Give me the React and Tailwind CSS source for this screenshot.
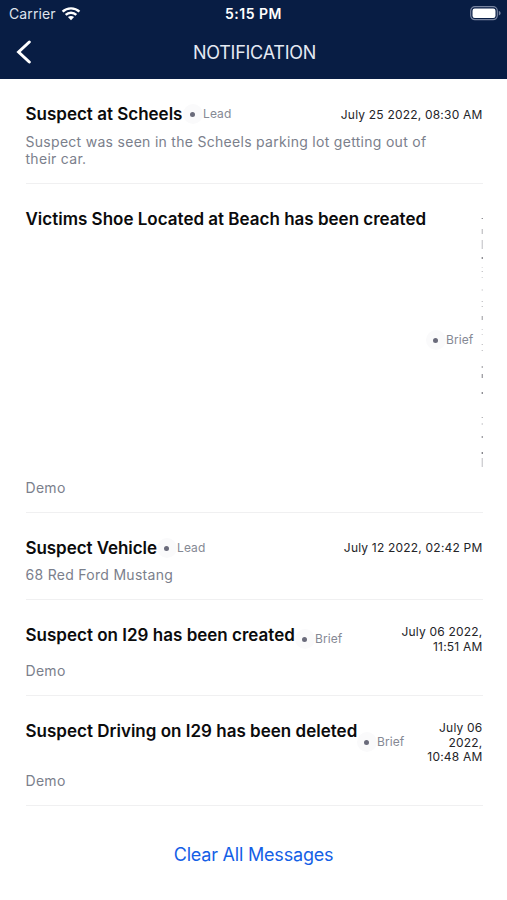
const MESSAGES = [
  {
    title: 'Suspect at Scheels', titleClass: 'w-[157px] tracking-[0]', kind: 'Lead', kindClass: 'pt-[11px]',
    date: ['July 25 2022, 08:30 AM'], dateClass: 'pt-[5px]',
    body: ['Suspect was seen in the Scheels parking lot getting out of', 'their car.'],
    row: 'h-[104px] pt-[23px]', head: 'h-[30px]',
  },
  {
    title: 'Victims Shoe Located at Beach has been created', titleClass: 'w-[400px] tracking-[0]', kind: 'Brief', kindClass: 'pt-[132px]',
    date: null, dateClass: '',
    body: ['Demo'],
    row: 'h-[329px] pt-[24px]', head: 'h-[271px]',
  },
  {
    title: 'Suspect Vehicle', titleClass: 'w-[131px] tracking-[-0.06px]', kind: 'Lead', kindClass: 'pt-[11px]',
    date: ['July 12 2022, 02:42 PM'], dateClass: 'pt-[4px]',
    body: ['68 Red Ford Mustang'],
    row: 'h-[87px] pt-[24px]', head: 'h-[29px]',
  },
  {
    title: 'Suspect on I29 has been created', titleClass: 'w-[269px] tracking-[0.01px]', kind: 'Brief', kindClass: 'pt-[15px]',
    date: ['July 06 2022,', '11:51 AM'], dateClass: 'pt-[1px]',
    body: ['Demo'],
    row: 'h-[96px] pt-[24px]', head: 'h-[38px]',
  },
  {
    title: 'Suspect Driving on I29 has been deleted', titleClass: 'w-[331px] tracking-[0.01px]', kind: 'Brief', kindClass: 'pt-[22px]',
    date: ['July 06', '2022,', '10:48 AM'], dateClass: 'pt-[1px]',
    body: ['Demo'],
    row: 'h-[110px] pt-[24px]', head: 'h-[52px]',
  },
];

// [offset, height, opacity] of every sliver left visible by the collapsed date column
const SLIVERS = [
  [6, 1, 0.6], [17, 5, 0.3], [28, 9, 0.25], [45, 2, 0.6], [55, 1, 0.15], [59, 1, 0.3], [65, 1, 0.2],
  [77, 2, 0.15], [89, 1, 0.3], [94, 1, 0.3], [104, 4, 0.4], [117, 1, 0.2], [122, 1, 0.2],
  [132, 1, 0.3], [138, 1, 0.3], [154, 2, 0.4], [162, 4, 0.5], [180, 2, 0.6],
  [205, 1, 0.4], [211, 2, 0.2], [224, 2, 0.5], [240, 2, 0.65], [246, 9, 0.25],
];

function StatusBar() {
  return (
    <div className="flex h-[27px] items-center text-white">
      <div className="flex w-[169px] items-center pl-[9px]">
        <span className="w-[47px] whitespace-nowrap text-[14px] leading-[20px] tracking-[0.1px] text-[#dfe3ec]">Carrier</span>
        <svg className="ml-[5px] h-[14px] w-[20px]" viewBox="0 0 20 14" fill="none" stroke="white" strokeWidth="2.4">
          <path d="M1.6 4.7C6.2 .2 13.8 .2 18.4 4.7" />
          <path d="M4.7 7.9C7.6 5 12.4 5 15.3 7.9" />
          <path d="M10 13.2L6.9 10C8.6 8.5 11.4 8.5 13.1 10Z" fill="white" stroke="none" />
        </svg>
      </div>
      <div className="w-[169px] whitespace-nowrap text-center text-[14px] font-semibold leading-[20px] tracking-[0.5px]">5:15 PM</div>
      <div className="flex w-[169px] justify-end pr-[6px]">
        <svg className="h-[15px] w-[31px]" viewBox="0 0 31 15">
          <rect x=".7" y=".7" width="26.6" height="13" rx="4.2" fill="none" stroke="#7884a0" strokeWidth="1.2" />
          <rect x="2.5" y="2.5" width="23" height="9.4" rx="2.2" fill="white" />
          <path d="M28.8 5v4.4c1.2-.4 1.8-1.2 1.8-2.2s-.6-1.8-1.8-2.2Z" fill="#7884a0" />
        </svg>
      </div>
    </div>
  );
}

function Message({ item }) {
  return (
    <section className={`border-b border-[#f0f0f1] ${item.row}`}>
      <div className={`flex items-start ${item.head}`}>
        <h2 className={`shrink-0 whitespace-nowrap text-[17px] font-semibold leading-[22px] text-[#0b0b0c] ${item.titleClass}`}>{item.title}</h2>
        <div className={`flex h-0 shrink-0 items-center ${item.kindClass}`}>
          <span className="flex h-[20px] w-[20.5px] items-center justify-center rounded-full bg-[#fafafb]">
            <span className="h-[5px] w-[5px] rounded-full bg-[#6a6b7b]" />
          </span>
          <span className="whitespace-nowrap text-[12px] leading-[16px] tracking-[0.1px] text-[#858994]">{item.kind}</span>
        </div>
        {item.date ? (
          <div className={`ml-auto pr-[0.5px] text-right text-[12px] leading-[14.5px] tracking-[0.2px] text-[#242428] ${item.dateClass}`}>
            {item.date.map((line) => (
              <div key={line} className="whitespace-nowrap">{line}</div>
            ))}
          </div>
        ) : (
          <svg className="ml-auto mt-[4px] h-[258px] w-[2px]" viewBox="0 0 2 258" fill="#45454f">
            {SLIVERS.map(([y, h, o]) => (
              <rect key={y} x="0.6" y={y} width="1.4" height={h} opacity={o} />
            ))}
          </svg>
        )}
      </div>
      <div className="text-[14px] leading-[17px] tracking-[0.29px] text-[#7b808c]">
        {item.body.map((line) => (
          <div key={line} className="whitespace-nowrap">{line}</div>
        ))}
      </div>
    </section>
  );
}

export default function App() {
  return (
    <div className="h-[900px] w-[507px] overflow-hidden bg-white font-['Inter','Liberation_Sans',sans-serif]">
      <header className="h-[79px] bg-[#081d44]">
        <StatusBar />
        <div className="flex h-[50px] items-center">
          <button className="flex w-[60px] pl-[16px]" aria-label="Back">
            <svg className="h-[24px] w-[16px]" viewBox="0 0 16 24" fill="none" stroke="white" strokeWidth="3" strokeLinecap="round">
              <path d="M13.3 2L2.6 12l10.7 10" />
            </svg>
          </button>
          <h1 className="w-[389px] pt-[2px] text-center text-[18px] leading-[24px] tracking-[-0.25px] text-[#e4e9f3]">NOTIFICATION</h1>
        </div>
      </header>
      <main className="mx-6 pl-[1.5px] pt-px">
        {MESSAGES.map((item) => (
          <Message key={item.title} item={item} />
        ))}
      </main>
      <div className="flex h-[98px] items-center justify-center">
        <button className="whitespace-nowrap text-[18px] leading-[24px] tracking-[-0.2px] text-[#1460e6]">Clear All Messages</button>
      </div>
    </div>
  );
}
